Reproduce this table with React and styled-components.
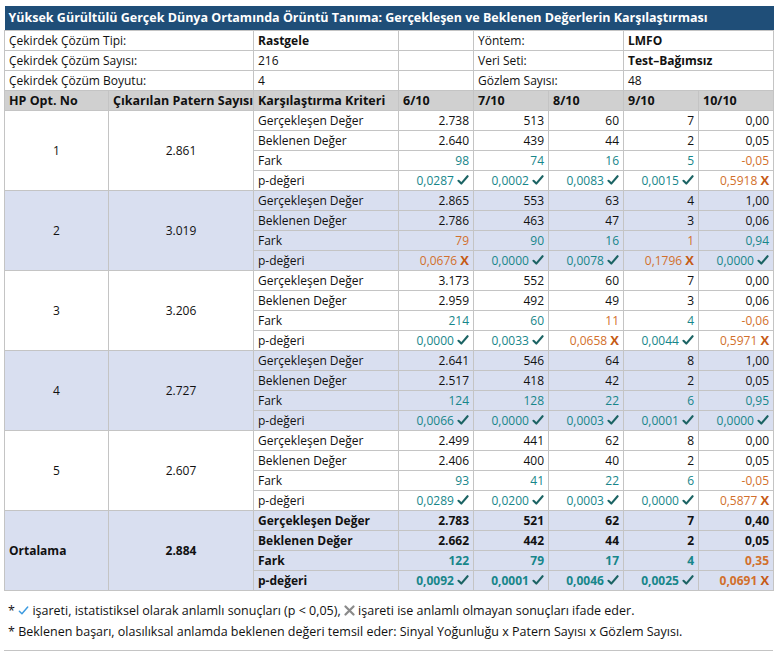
import React from 'react';
import styled, { createGlobalStyle } from 'styled-components';

const GlobalStyle = createGlobalStyle`
  body {
    margin: 0;
    background: #ffffff;
    font-family: "Open Sans", "Noto Sans", "Liberation Sans", sans-serif;
    color: #111111;
  }
`;

const TEAL = '#17868a';
const ORANGE = '#d2702c';
const CHECK = '#1c6464';
const XCOL = '#c65a14';

const blocks = [
  {
    no: '1', count: '2.861',
    g: ['2.738', '513', '60', '7', '0,00'],
    b: ['2.640', '439', '44', '2', '0,05'],
    f: ['98', '74', '16', '5', '-0,05'],
    p: [['0,0287', 1], ['0,0002', 1], ['0,0083', 1], ['0,0015', 1], ['0,5918', 0]],
  },
  {
    no: '2', count: '3.019',
    g: ['2.865', '553', '63', '4', '1,00'],
    b: ['2.786', '463', '47', '3', '0,06'],
    f: ['79', '90', '16', '1', '0,94'],
    p: [['0,0676', 0], ['0,0000', 1], ['0,0078', 1], ['0,1796', 0], ['0,0000', 1]],
  },
  {
    no: '3', count: '3.206',
    g: ['3.173', '552', '60', '7', '0,00'],
    b: ['2.959', '492', '49', '3', '0,06'],
    f: ['214', '60', '11', '4', '-0,06'],
    p: [['0,0000', 1], ['0,0033', 1], ['0,0658', 0], ['0,0044', 1], ['0,5971', 0]],
  },
  {
    no: '4', count: '2.727',
    g: ['2.641', '546', '64', '8', '1,00'],
    b: ['2.517', '418', '42', '2', '0,05'],
    f: ['124', '128', '22', '6', '0,95'],
    p: [['0,0066', 1], ['0,0000', 1], ['0,0003', 1], ['0,0001', 1], ['0,0000', 1]],
  },
  {
    no: '5', count: '2.607',
    g: ['2.499', '441', '62', '8', '0,00'],
    b: ['2.406', '400', '40', '2', '0,05'],
    f: ['93', '41', '22', '6', '-0,05'],
    p: [['0,0289', 1], ['0,0200', 1], ['0,0003', 1], ['0,0000', 1], ['0,5877', 0]],
  },
];

const average = {
  no: 'Ortalama', count: '2.884',
  g: ['2.783', '521', '62', '7', '0,40'],
  b: ['2.662', '442', '44', '2', '0,05'],
  f: ['122', '79', '17', '4', '0,35'],
  p: [['0,0092', 1], ['0,0001', 1], ['0,0046', 1], ['0,0025', 1], ['0,0691', 0]],
};

const Check = ({ color = CHECK, size = 12, weight = 2.1 }) => (
  <svg width={size} height={size} viewBox="0 0 12 12" style={{ verticalAlign: '-1px' }}>
    <path d="M1.5 6.8 L4.3 9.6 L10.6 2.2" fill="none" stroke={color} strokeWidth={weight} strokeLinecap="round" strokeLinejoin="round" />
  </svg>
);

const Cross = ({ color = '#8a8a8a', size = 11 }) => (
  <svg width={size} height={size} viewBox="0 0 11 11" style={{ verticalAlign: '-1px' }}>
    <path d="M1.5 1.5 L9.5 9.5 M9.5 1.5 L1.5 9.5" fill="none" stroke={color} strokeWidth="2.2" strokeLinecap="round" />
  </svg>
);

const App = () => {
  const renderBlock = (blk, i, avg) => {
    const shade = avg || i % 2 === 1;
    const sig = blk.p.map((x) => x[1]);
    return (
      <React.Fragment key={blk.no}>
        <Row $shade={shade}>
          <NoCell rowSpan={4} $avg={avg}>{blk.no}</NoCell>
          <CountCell rowSpan={4} $avg={avg}>{blk.count}</CountCell>
          <Crit $bold={avg}>Gerçekleşen Değer</Crit>
          {blk.g.map((v, k) => <Num key={k} $bold={avg}>{v}</Num>)}
        </Row>
        <Row $shade={shade}>
          <Crit $bold={avg}>Beklenen Değer</Crit>
          {blk.b.map((v, k) => <Num key={k} $bold={avg}>{v}</Num>)}
        </Row>
        <Row $shade={shade}>
          <Crit $bold={avg}>Fark</Crit>
          {blk.f.map((v, k) => (
            <Num key={k} $bold={avg} $color={sig[k] ? TEAL : ORANGE}>{v}</Num>
          ))}
        </Row>
        <Row $shade={shade}>
          <Crit $bold={avg}>p-değeri</Crit>
          {blk.p.map(([v, s], k) => (
            <Num key={k} $bold={avg} $color={s ? TEAL : ORANGE}>
              {v}{' '}
              {s ? <Check /> : <XMark>X</XMark>}
            </Num>
          ))}
        </Row>
      </React.Fragment>
    );
  };

  return (
    <Page>
      <GlobalStyle />
      <Table>
        <colgroup>
          <col style={{ width: 104 }} />
          <col style={{ width: 145 }} />
          <col style={{ width: 145 }} />
          <col style={{ width: 75 }} />
          <col style={{ width: 75 }} />
          <col style={{ width: 75 }} />
          <col style={{ width: 75 }} />
          <col style={{ width: 75 }} />
        </colgroup>
        <tbody>
          <TitleRow>
            <Title colSpan={8}>Yüksek Gürültülü Gerçek Dünya Ortamında Örüntü Tanıma: Gerçekleşen ve Beklenen Değerlerin Karşılaştırması</Title>
          </TitleRow>
          <Row>
            <Info colSpan={2}>Çekirdek Çözüm Tipi:</Info>
            <Info $bold>Rastgele</Info>
            <Info />
            <Info colSpan={2}>Yöntem:</Info>
            <Info colSpan={2} $bold>LMFO</Info>
          </Row>
          <Row>
            <Info colSpan={2}>Çekirdek Çözüm Sayısı:</Info>
            <Info>216</Info>
            <Info />
            <Info colSpan={2}>Veri Seti:</Info>
            <Info colSpan={2} $bold>Test–Bağımsız</Info>
          </Row>
          <Row>
            <Info colSpan={2}>Çekirdek Çözüm Boyutu:</Info>
            <Info>4</Info>
            <Info />
            <Info colSpan={2}>Gözlem Sayısı:</Info>
            <Info colSpan={2}>48</Info>
          </Row>
          <HeadRow>
            <Head>HP Opt. No</Head>
            <Head>Çıkarılan Patern Sayısı</Head>
            <Head>Karşılaştırma Kriteri</Head>
            <Head>6/10</Head>
            <Head>7/10</Head>
            <Head>8/10</Head>
            <Head>9/10</Head>
            <Head>10/10</Head>
          </HeadRow>
          {blocks.map((b, i) => renderBlock(b, i, false))}
          {renderBlock(average, 0, true)}
        </tbody>
      </Table>
      <Notes>
        <Note>
          * <Check color="#3d9be0" size={11} weight={1.6} /> işareti, istatistiksel olarak anlamlı sonuçları (p &lt; 0,05), <Cross /> işareti ise anlamlı olmayan sonuçları ifade eder.
        </Note>
        <Note>
          * Beklenen başarı, olasılıksal anlamda beklenen değeri temsil eder: Sinyal Yoğunluğu x Patern Sayısı x Gözlem Sayısı.
        </Note>
      </Notes>
    </Page>
  );
};

export default App;

const Page = styled.div`
  padding: 6px 0 0 4px;
  width: 769px;
`;

const Table = styled.table`
  border-collapse: collapse;
  table-layout: fixed;
  width: 769px;
  font-size: 12px;
`;

const TitleRow = styled.tr`
  height: 24px;
`;

const Title = styled.td`
  background: #1f4e78;
  color: #ffffff;
  font-weight: 700;
  font-size: 12.5px;
  height: 24px;
  line-height: 24px;
  padding: 0 4px;
  white-space: nowrap;
  border: none;
`;

const Row = styled.tr`
  height: 20px;
  background: ${(p) => (p.$shade ? '#d9dff0' : '#ffffff')};
`;

const HeadRow = styled.tr`
  height: 20px;
  background: #d0d0d0;
`;

const Cell = styled.td`
  border: 1px solid #c4c4c4;
  padding: 0 4px;
  height: 19px;
  line-height: 18px;
  white-space: nowrap;
  overflow: hidden;
`;

const Info = styled(Cell)`
  font-weight: ${(p) => (p.$bold ? 700 : 400)};
`;

const Head = styled(Cell)`
  font-weight: 700;
  font-size: 12.5px;
`;

const NoCell = styled(Cell)`
  text-align: ${(p) => (p.$avg ? 'left' : 'center')};
  font-weight: ${(p) => (p.$avg ? 700 : 400)};
`;

const CountCell = styled(Cell)`
  text-align: center;
  font-weight: ${(p) => (p.$avg ? 700 : 400)};
`;

const Crit = styled(Cell)`
  font-weight: ${(p) => (p.$bold ? 700 : 400)};
`;

const Num = styled(Cell)`
  text-align: right;
  color: ${(p) => p.$color || '#111111'};
  font-weight: ${(p) => (p.$bold ? 700 : 400)};
`;

const XMark = styled.span`
  color: ${XCOL};
  font-weight: 700;
  font-size: 13px;
`;

const Notes = styled.div`
  margin-top: 9px;
  padding: 0 4px 8px;
  border-bottom: 1px solid #c4c4c4;
`;

const Note = styled.div`
  font-size: 12.5px;
  line-height: 21px;
  color: #111111;
  white-space: nowrap;
`;
